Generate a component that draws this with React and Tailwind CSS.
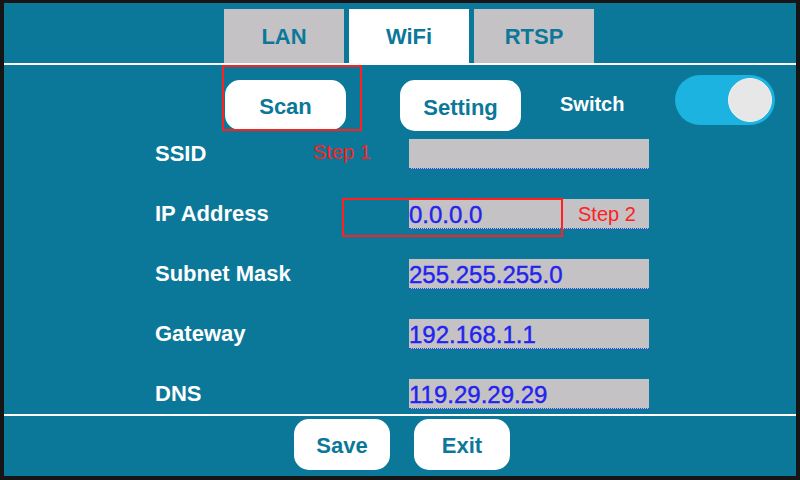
import React, { useState } from 'react';

const fields = [
  { label: 'SSID', value: '' },
  { label: 'IP Address', value: '0.0.0.0' },
  { label: 'Subnet Mask', value: '255.255.255.0' },
  { label: 'Gateway', value: '192.168.1.1' },
  { label: 'DNS', value: '119.29.29.29' },
];

const tabs = ['LAN', 'WiFi', 'RTSP'];

const App = () => {
  const [activeTab, setActiveTab] = useState('WiFi');
  const [enabled, setEnabled] = useState(true);

  return (
    <div
      className="w-[800px] h-[480px] bg-[#141514] pt-[3px] pl-[4px] pr-[4px] pb-[4px]"
      style={{ fontFamily: '"Liberation Sans", Arial, sans-serif' }}
    >
      <div className="w-full h-full bg-[#0b7899] flex flex-col">
        {/* Tabs */}
        <div className="h-[60px] flex items-end pl-[220px] gap-[5px]">
          {tabs.map((tab) => (
            <button
              key={tab}
              onClick={() => setActiveTab(tab)}
              className={`w-[120px] h-[54px] flex items-center justify-center text-[22px] font-bold text-[#0b7899] ${
                activeTab === tab ? 'bg-white' : 'bg-[#c4c2c5]'
              }`}
            >
              {tab}
            </button>
          ))}
        </div>
        <div className="h-[2px] bg-white" />

        {/* Content */}
        <div className="flex-1 flex flex-col relative">
          <div className="h-[74px] flex items-start relative">
            <button className="ml-[221px] mt-[15px] w-[121px] h-[50px] pt-[3px] bg-white rounded-[15px] text-[22px] font-bold text-[#0b7899]">
              Scan
            </button>
            <div className="absolute left-[218px] top-0 w-[140px] h-[66px] border-2 border-[#ff2020]" />
            <button className="ml-[54px] mt-[15px] w-[121px] h-[51px] pt-[3px] bg-white rounded-[15px] text-[22px] font-bold text-[#0b7899]">
              Setting
            </button>
            <span className="ml-[39px] mt-[27px] text-[20px] font-bold text-white leading-[24px]">Switch</span>
            <button
              onClick={() => setEnabled(!enabled)}
              className={`ml-[51px] mt-[10px] w-[100px] h-[50px] rounded-full flex items-center px-[3px] ${
                enabled ? 'bg-[#1cb3e0] justify-end' : 'bg-[#c4c2c5] justify-start'
              }`}
            >
              <span className="w-[44px] h-[44px] rounded-full bg-[#e7e7e7] border border-[#f2f2f2]" />
            </button>
          </div>

          <div className="flex flex-col gap-[30px]">
            {fields.map((f, i) => (
              <div key={f.label} className="h-[30px] flex items-center relative">
                <span className="pl-[151px] w-[405px] text-[22px] font-bold text-white leading-none">
                  {f.label}
                </span>
                <div className="w-[240px] h-[30px] pt-[2px] bg-[#c4c2c5] border-b border-dotted border-[#3b3bff] flex items-center text-[24px] text-[#2323ee] leading-none [-webkit-text-stroke:0.4px_#2323ee]">
                  {f.value}
                </div>
                {i === 0 && (
                  <span className="absolute left-[309px] top-[3px] text-[20px] text-[#ff2020] leading-none">
                    Step 1
                  </span>
                )}
                {i === 1 && (
                  <>
                    <span className="absolute left-[574px] top-[5px] text-[20px] text-[#ff2020] leading-none">
                      Step 2
                    </span>
                    <div className="absolute left-[338px] top-[-1px] w-[221px] h-[39px] border-2 border-[#ff2020]" />
                  </>
                )}
              </div>
            ))}
          </div>
        </div>

        <div className="h-[2px] bg-white" />

        {/* Footer */}
        <div className="h-[60px] flex items-start pl-[290px] gap-[24px]">
          <button className="mt-[3px] w-[96px] h-[51px] pt-[2px] bg-white rounded-[15px] text-[22px] font-bold text-[#0b7899]">
            Save
          </button>
          <button className="mt-[3px] w-[96px] h-[51px] pt-[2px] bg-white rounded-[15px] text-[22px] font-bold text-[#0b7899]">
            Exit
          </button>
        </div>
      </div>
    </div>
  );
};

export default App;
